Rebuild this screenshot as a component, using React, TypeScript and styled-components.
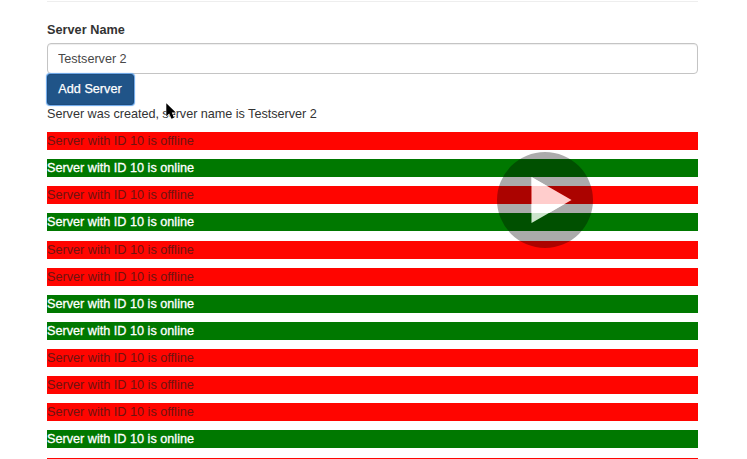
import React from "react";
import styled, { createGlobalStyle } from "styled-components";

const GlobalStyle = createGlobalStyle`
  *, *::before, *::after { box-sizing: border-box; }
  body {
    margin: 0;
    background: #fff;
    color: #333;
    font: 12.67px/18px "Liberation Sans", Arial, sans-serif;
    overflow: hidden;
  }
`;

const Page = styled.main`
  position: relative;
  height: 459px;
  padding: 1px 49px 0 47px;
  overflow: hidden;
`;

const Divider = styled.hr`
  height: 1px;
  margin: 0 0 19px;
  border: 0;
  background: #eee;
`;

const Form = styled.form`
  display: flex;
  flex-direction: column;
  align-items: flex-start;
`;

const Label = styled.label`
  height: 22px;
  font-weight: 700;
  letter-spacing: 0.04px;
`;

const Input = styled.input`
  width: 100%;
  height: 31px;
  padding: 0 10px;
  border: 1px solid #c4c4c4;
  border-radius: 4px;
  box-shadow: inset 0 1px 1px rgba(0, 0, 0, 0.07);
  color: #484848;
  background: #fff;
  font: inherit;
  letter-spacing: -0.03px;
  outline: none;
`;

const AddButton = styled.button`
  width: 87px;
  height: 31px;
  padding: 0 1px 1px 0;
  border: 1px solid #1d4b7c;
  border-radius: 3px;
  box-shadow: 0 0 1px 1px #65a5ea;
  color: #fff;
  background: #205488;
  font: inherit;
  -webkit-text-stroke: 0.25px #fff;
`;

const Message = styled.p`
  margin: 0 0 9px;
  letter-spacing: -0.035px;
`;

const StatusList = styled.div`
  display: flex;
  flex-direction: column;
  gap: 9.14px;
`;

const Status = styled.p<{ $online: boolean }>`
  flex: none;
  height: 18px;
  margin: 0;
  color: ${({ $online }) => ($online ? "#fff" : "#6e1411")};
  background: ${({ $online }) => ($online ? "#007800" : "#ff0500")};
  -webkit-text-stroke: ${({ $online }) => ($online ? "0.3px #fff" : "0")};
`;

const PlayButton = styled.svg`
  position: absolute;
  left: 497px;
  top: 152px;
`;

const Cursor = styled.svg`
  position: absolute;
  left: 165px;
  top: 102px;
`;

const statuses = [false, true, false, true, false, false, true, true, false, false, false, true];

export default function App() {
  return (
    <Page>
      <GlobalStyle />
      <Divider />
      <Form onSubmit={(e) => e.preventDefault()}>
        <Label htmlFor="server">Server Name</Label>
        <Input id="server" defaultValue="Testserver 2" />
        <AddButton type="submit">Add Server</AddButton>
      </Form>
      <Message>Server was created, server name is Testserver 2</Message>
      <StatusList>
        {statuses.map((online, i) => (
          <Status key={i} $online={online}>
            Server with ID 10 is {online ? "online" : "offline"}
          </Status>
        ))}
        <Status $online={false} />
      </StatusList>
      <Cursor width="13" height="19" viewBox="0 0 13 19">
        <path
          d="M1.3 1.2V14.2L4.2 11.5L6.5 16.8L9 15.7L6.8 10.6H10.8Z"
          fill="#000"
          stroke="#fff"
          strokeWidth="1.2"
          strokeOpacity="0.85"
          paintOrder="stroke"
        />
      </Cursor>
      <PlayButton width="96" height="96" viewBox="0 0 96 96">
        <path
          d="M48 0A48 48 0 1 1 48 96A48 48 0 1 1 48 0ZM34.5 25L74.5 48L34.5 71Z"
          fill="#000"
          fillOpacity="0.33"
          fillRule="evenodd"
        />
        <path d="M34.5 25L74.5 48L34.5 71Z" fill="#fff" fillOpacity="0.8" />
      </PlayButton>
    </Page>
  );
}
